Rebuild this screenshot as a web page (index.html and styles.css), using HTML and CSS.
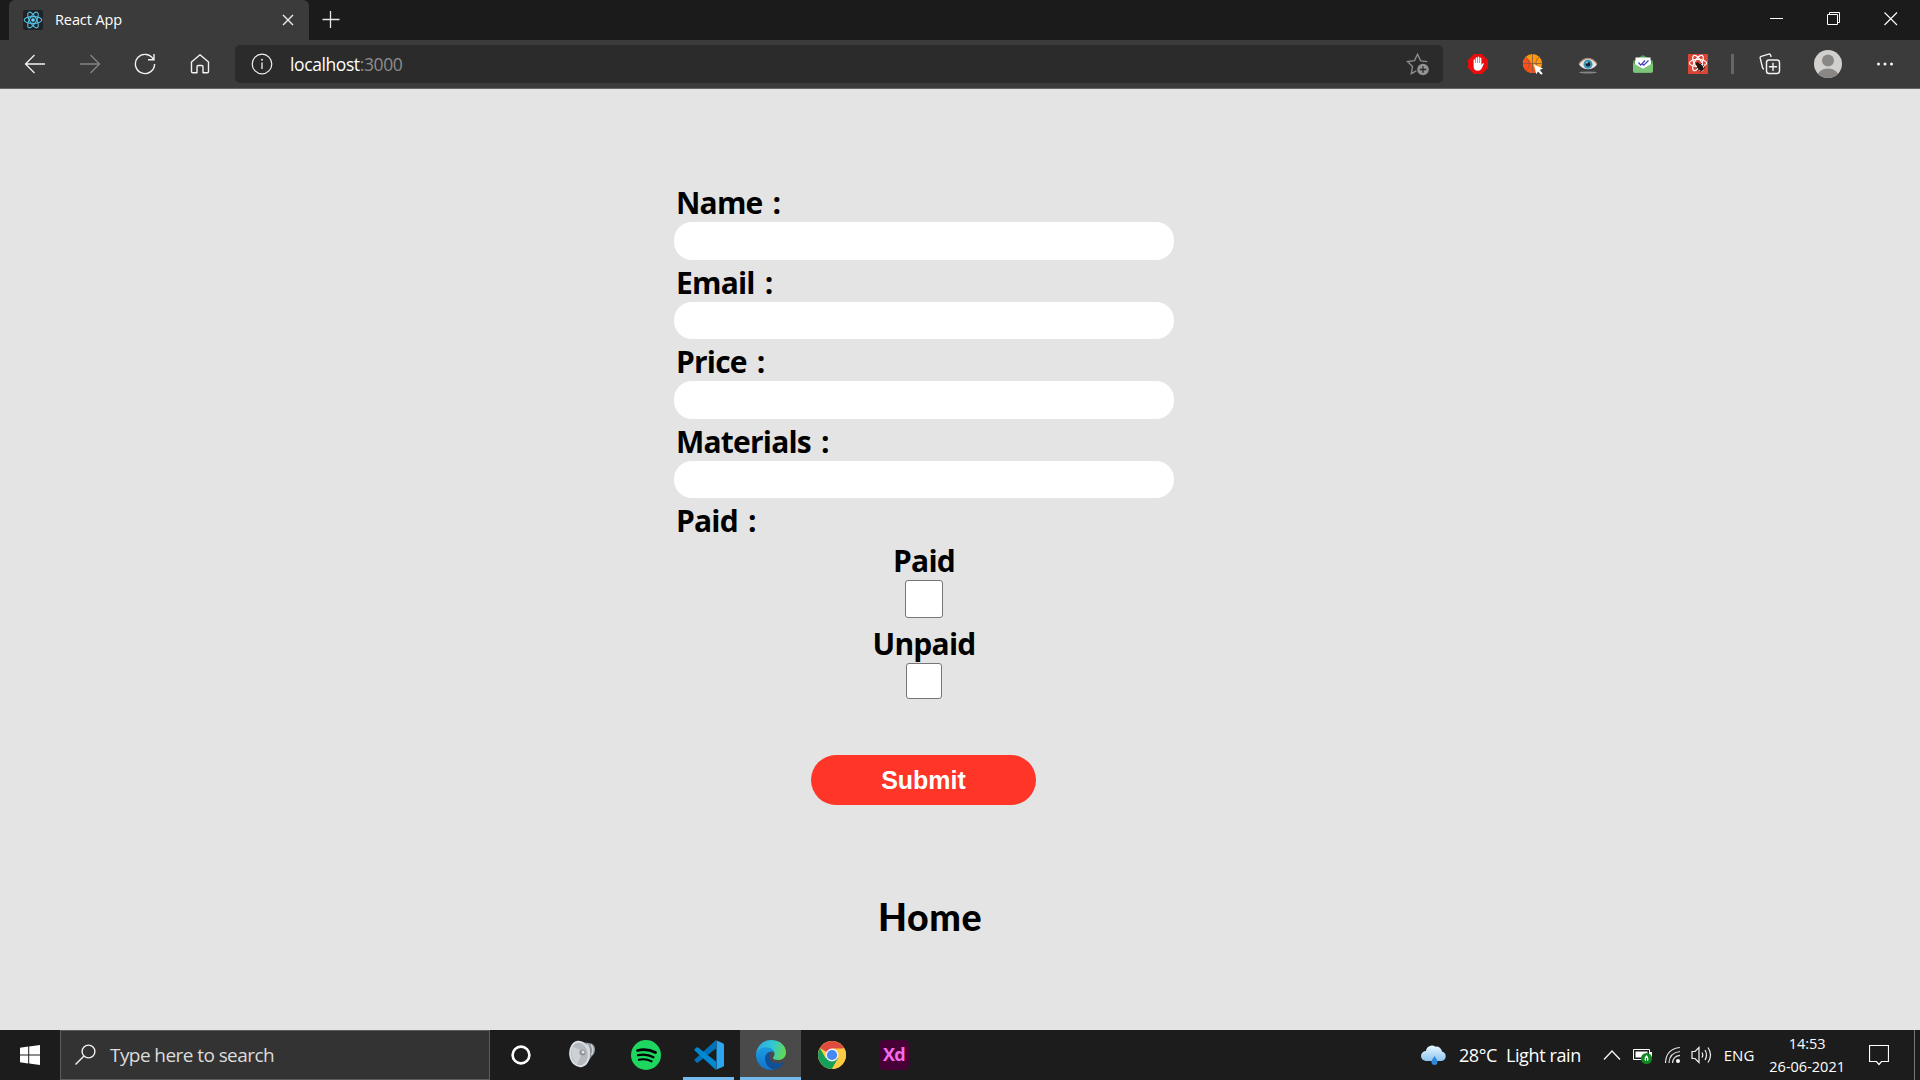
FILE: index.html
```html
<!DOCTYPE html>
<html lang="en">
<head>
<meta charset="utf-8">
<title>React App</title>
<link rel="stylesheet" href="styles.css">
</head>
<body>
<header class="tabstrip">
  <div class="tab">
    <svg class="favicon" width="20" height="20" viewBox="0 0 20 20"><rect width="20" height="20" rx="2" fill="#202226"/><g fill="none" stroke="#57c4e5" stroke-width="1.1"><ellipse cx="10" cy="10" rx="8.8" ry="3.4"/><ellipse cx="10" cy="10" rx="8.8" ry="3.4" transform="rotate(60 10 10)"/><ellipse cx="10" cy="10" rx="8.8" ry="3.4" transform="rotate(120 10 10)"/></g><circle cx="10" cy="10" r="1.8" fill="#61dafb"/></svg>
    <span class="tab-title">React App</span>
    <svg class="tab-close" width="12" height="12" viewBox="0 0 12 12"><path d="M1 1l10 10M11 1L1 11" stroke="#eee" stroke-width="1.4"/></svg>
  </div>
  <svg class="new-tab" width="18" height="18" viewBox="0 0 18 18"><path d="M.5 8.5h17M8.5 0v17" stroke="#e8e8e8" stroke-width="1.3"/></svg>
  <div class="window-controls">
    <svg width="14" height="14" viewBox="0 0 14 14"><path d="M0 6.5h13" stroke="#fff"/></svg>
    <svg width="14" height="14" viewBox="0 0 14 14"><path d="M.5 2.5h10v10H.5zM2.5 2.5v-2h10v10h-2" fill="none" stroke="#fff"/></svg>
    <svg width="14" height="14" viewBox="0 0 14 14"><path d="M.5 .5l12.5 12.5M13 .5L.5 13" stroke="#fff" stroke-width="1.1"/></svg>
  </div>
</header>
<nav class="toolbar">
  <div class="nav-buttons">
    <svg width="22" height="22" viewBox="0 0 22 22"><path d="M21 11H1.500M10.500 2L1.500 11l9 9" fill="none" stroke="#f2f2f2" stroke-width="1.3"/></svg>
    <svg width="22" height="22" viewBox="0 0 22 22"><path d="M1 11h19.500M11.500 2l9 9-9 9" fill="none" stroke="#858585" stroke-width="1.3"/></svg>
    <svg width="22" height="22" viewBox="0 0 22 22"><path d="M19.500 6.500a9.600 9.600 0 1 0 1.100 4.500M20 1v5.800h-6" fill="none" stroke="#f2f2f2" stroke-width="1.4"/></svg>
    <svg width="22" height="22" viewBox="0 0 22 22"><path d="M2.500 9L11 1.800 19.500 9v9.500q0 1.200-1.200 1.200h-4.300v-6q0-1.200-1.200-1.200H9.200q-1.200 0-1.200 1.200v6H3.700q-1.200 0-1.200-1.200z" fill="none" stroke="#f2f2f2" stroke-width="1.4" stroke-linejoin="round"/></svg>
  </div>
  <div class="address">
    <svg width="22" height="22" viewBox="0 0 22 22"><circle cx="11" cy="11" r="9.800" fill="none" stroke="#f2f2f2" stroke-width="1.200"/><path d="M11 9.500v6.500" stroke="#f2f2f2" stroke-width="1.300"/><circle cx="11" cy="6.800" r=".95" fill="#f2f2f2"/></svg>
    <span class="url"><span class="host">localhost</span><span class="port">:3000</span></span>
    <svg class="star" width="24" height="24" viewBox="0 0 24 24"><path d="M21.200 9.600l-6.500-.7L11.500 2.300 8.500 8.600l-7 1 5 5-1.200 7 5-2.700" fill="none" stroke="#8d8d8d" stroke-width="1.400"/><circle cx="17" cy="17.500" r="5.800" fill="#939393"/><path d="M17 14.300v6.400M13.800 17.500h6.400" stroke="#2b2b2b" stroke-width="1.300"/></svg>
  </div>
  <div class="extensions">
    <svg width="22" height="22" viewBox="0 0 22 22"><path d="M7 1h8l6 6v8l-6 6H7l-6-6V7z" fill="#e90d0d"/><path d="M6.600 11V6.700q.9-1 1.500 0V10h.5V4.800q.9-1 1.600 0V10h.5V4q.9-1 1.600 0v6h.5V5q.9-1 1.600 0v7l1.200-1.600q1-.6 1.400.2l-2.300 5q-1.300 2.200-3.700 2.200-4.400 0-4.400-4.500z" fill="#fff"/></svg>
    <svg width="22" height="22" viewBox="0 0 22 22"><circle cx="10.500" cy="10.500" r="9.600" fill="#ff980d"/><path d="M1 10.500l9.500 1 4 7.700A9.600 9.600 0 0 1 1 10.500z" fill="#ff4f19"/><path d="M3.300 4.500Q9 7 9.500 11q1 4 0 9A9.600 9.600 0 0 1 3.300 4.500z" fill="#ff4f19"/><path d="M10.500 1v19M1 10.500h19M4 4q6 6 1 13.500M17 4q-5 5-2 9" fill="none" stroke="#855943" stroke-width=".8"/><path d="M12 11.500l9 4-3.300 1.500 3 3.400-1.500 1.300-3.200-3.300-1.800 2.800z" fill="#fff"/></svg>
    <svg width="22" height="22" viewBox="0 0 22 22"><path d="M2 11.500Q5.500 5.700 11 5.700t9 5.800q-3.500 4.800-9 4.800t-9-4.800z" fill="#e9e6e3"/><path d="M2 11.200Q5.500 5.600 11 5.600t9 5.600" fill="none" stroke="#b99478" stroke-width="1.200"/><circle cx="11" cy="11.300" r="4.500" fill="#3c93b4"/><circle cx="11" cy="11.300" r="2.200" fill="#10222c"/><circle cx="10" cy="9.800" r=".8" fill="#fff"/><ellipse cx="11" cy="19.500" rx="9" ry=".9" fill="#858585"/></svg>
    <svg width="22" height="22" viewBox="0 0 22 22"><path d="M1 8l10-6 10 6v10q0 1.800-1.800 1.800H2.800Q1 19.800 1 18z" fill="#4f9f50"/><path d="M3.500 4.500h15v9l-7.500 5-7.500-5z" fill="#fff"/><path d="M1 10l10 5.500L21 10v8q0 1.800-1.800 1.800H2.800Q1 19.800 1 18z" fill="#7cc579"/><path d="M3 8v3l8 4.500 8-4.500V8z" fill="#fff"/><path d="M6.500 9.500l2.200 2.700L13 7.500M10.500 11l1.300 1.200 4.700-4.700" fill="none" stroke="#3d3dbb" stroke-width="1.200"/></svg>
    <svg width="22" height="22" viewBox="0 0 22 22"><rect x="1" y="1" width="20" height="20" rx="1" fill="#dc4535"/><g fill="none" stroke="#fff" stroke-width="1.200"><ellipse cx="11" cy="10" rx="8.600" ry="3.600"/><ellipse cx="11" cy="10" rx="8.600" ry="3.600" transform="rotate(60 11 10)"/><ellipse cx="11" cy="10" rx="8.600" ry="3.600" transform="rotate(120 11 10)"/></g><g transform="rotate(-40 13 14)" fill="#201511"><ellipse cx="13" cy="14.500" rx="2.500" ry="3.900"/><circle cx="13" cy="10" r="1.700"/><path d="M9 12.500h8M8.700 15h8.600M9.500 17.500h7" stroke="#201511" stroke-width=".9"/></g></svg>
  </div>
  <div class="divider"></div>
  <svg class="collections" width="22" height="22" viewBox="0 0 22 22"><path d="M5 16q-1.200 0-1.500-1.500L1.200 5.200q-.3-1.500 1-1.900L9.800 1.100q1.400-.3 1.800 1l.5 1.900" fill="none" stroke="#f2f2f2" stroke-width="1.400"/><rect x="7.500" y="7" width="13" height="13.500" rx="2.500" fill="none" stroke="#f2f2f2" stroke-width="1.500"/><path d="M14 9.700v8.200M9.900 13.800h8.200" stroke="#f2f2f2" stroke-width="1.400"/></svg>
  <svg class="avatar" width="28" height="28" viewBox="0 0 28 28"><clipPath id="av"><circle cx="14" cy="14" r="14"/></clipPath><g clip-path="url(#av)"><rect width="28" height="28" fill="#d2d0ce"/><circle cx="14" cy="10.500" r="6" fill="#8a8683"/><ellipse cx="14" cy="26" rx="10.500" ry="7.500" fill="#8a8683"/></g></svg>
  <svg class="more" width="18" height="6" viewBox="0 0 18 6"><g fill="#f4f4f4"><circle cx="2.500" cy="3" r="1.500"/><circle cx="9" cy="3" r="1.500"/><circle cx="15.500" cy="3" r="1.500"/></g></svg>
</nav>
<main class="page">
  <form class="form">
    <label class="label" for="name">Name :</label><input class="field" id="name" type="text">
    <label class="label" for="email">Email :</label><input class="field" id="email" type="text">
    <label class="label" for="price">Price :</label><input class="field" id="price" type="text">
    <label class="label" for="materials">Materials :</label><input class="field" id="materials" type="text">
    <span class="label">Paid :</span>
    <div class="choice"><span class="choice-name">Paid</span><span class="box"></span></div>
    <div class="choice"><span class="choice-name">Unpaid</span><span class="box box-small"></span></div>
    <button class="submit" type="button">Submit</button>
  </form>
  <a class="home">Home</a>
</main>
<footer class="taskbar">
  <div class="start"><svg width="20" height="20" viewBox="0 0 20 20"><path d="M0 2.800l8.200-1.200v7.900H0zM9.200 1.400L20 0v9.500H9.200zM0 10.500h8.200v7.900L0 17.200zM9.200 10.500H20V20L9.200 18.600z" fill="#fff"/></svg></div>
  <div class="search"><svg width="22" height="22" viewBox="0 0 22 22"><circle cx="13.500" cy="7.500" r="6.400" fill="none" stroke="#f2f2f2" stroke-width="1.400"/><path d="M9 12L.5 20.500" stroke="#f2f2f2" stroke-width="1.400"/></svg><span class="search-text">Type here to search</span></div>
  <div class="apps">
    <div class="app"><svg width="30" height="30" viewBox="0 0 30 30"><circle cx="15" cy="15" r="8.400" fill="none" stroke="#fff" stroke-width="2.600"/></svg></div>
    <div class="app"><svg width="30" height="30" viewBox="0 0 30 30"><path d="M14 2l8 1q5 .5 6 5 .5 5-3 8l-7 10z" fill="#8d949b"/><path d="M20 4q4 5 1 12M24 4.500q3.500 5 .5 10.500" stroke="#d0d5da" fill="none" stroke-width="1.500"/><ellipse cx="12.500" cy="14" rx="10.300" ry="13.300" transform="rotate(-8 12.500 14)" fill="#dce0e6"/><ellipse cx="12.500" cy="14" rx="8.500" ry="11.300" transform="rotate(-8 12.500 14)" fill="#b5bac0"/><path d="M5.500 6.500L16 11 10 25Q2.500 16 5.500 6.500z" fill="#cdd1d6"/><circle cx="15.500" cy="12.500" r="3" fill="#8b9197"/><circle cx="16" cy="12" r="1.500" fill="#e6e6e6"/></svg></div>
    <div class="app app-wide"><svg width="30" height="30" viewBox="0 0 30 30"><circle cx="15" cy="15" r="15" fill="#1ed760"/><g fill="none" stroke="#000" stroke-linecap="round"><path d="M6.500 10.500q9.500-2.500 18 2" stroke-width="2.800"/><path d="M7 15.200q8.500-2 15.500 2" stroke-width="2.300"/><path d="M7.700 19.700q7-1.600 13 1.700" stroke-width="1.900"/></g></svg></div>
    <div class="app app-code"><svg width="30" height="30" viewBox="0 0 30 30"><path d="M22 0L.8 19.200q-.8.900 0 1.700l1.700 1.500q.8.600 1.600 0L22 8.500z" fill="#0070b8"/><path d="M22 30L.8 10.800q-.8-.9 0-1.700l1.700-1.500q.8-.6 1.600 0L22 21.500z" fill="#0089d2"/><path d="M21.500 0L29 3.200q1 .5 1 1.600v20.400q0 1.100-1 1.600L21.500 30q1 0 1-1.200V1.200Q22.500 0 21.500 0z" fill="#2ba7f2"/></svg></div>
    <div class="app app-edge"><svg width="30" height="30" viewBox="0 0 30 30"><defs><linearGradient id="eg" x1="0" y1=".4" x2="1" y2=".6"><stop stop-color="#2ea9e2"/><stop offset=".5" stop-color="#31c7d6"/><stop offset="1" stop-color="#66dc49"/></linearGradient><linearGradient id="eb" x1="0" y1="0" x2="0" y2="1"><stop stop-color="#1b9de0"/><stop offset="1" stop-color="#1273cc"/></linearGradient></defs><path d="M0 15C.5 6 7 0 15 0c9 0 15 5.500 15 12.500 0 5-4 7.500-8 7.500-3 0-5-1-5-2s1.500-1.500 1.500-4c0-3-3-6-7.500-6C5 8 1 12 0 15z" fill="url(#eg)"/><path d="M0 15c1-5 5-7.700 10-7.700 5 0 8.500 3 8.500 6-1-1.500-2.500-2-4-1.500C10 13 8.500 17 9.500 21c1 4.500 5 8 9 8.500C8 32 0 24 0 15z" fill="url(#eb)"/><path d="M14.500 11.800C10 13 8.500 17 9.500 21c1 4.500 5 8.300 9 8.500 4-.7 7-3 9-6 .5-1-.2-1.400-1-1-6 2.500-14-.5-13.500-7 .1-1.700.7-2.900 1.500-3.700z" fill="#0f509b"/></svg></div>
    <div class="app"><svg width="30" height="30" viewBox="0 0 30 30"><circle cx="15" cy="15" r="14" fill="#fdca43"/><path d="M15 15L2.900 8A14 14 0 0 1 27.100 8z" fill="#e04a3f"/><path d="M15 15l6.100 3.500L15 29A14 14 0 0 1 2.900 8l6 10.500z" fill="#159f5b"/><path d="M15 8.500h12.400A14 14 0 0 1 15 29l6-10.500z" fill="#fdca43"/><circle cx="15" cy="15" r="6.500" fill="#eef1f5"/><circle cx="15" cy="15" r="5.100" fill="#4688f4"/></svg></div>
    <div class="app"><span class="xd">Xd</span></div>
  </div>
  <div class="tray">
    <svg class="weather" width="26" height="22" viewBox="0 0 26 22"><defs><linearGradient id="wc" x1="0" y1="0" x2="0" y2="1"><stop stop-color="#eaf7ff"/><stop offset="1" stop-color="#8cc4f0"/></linearGradient></defs><path d="M5 17a5 5 0 0 1 0-10 6 5.500 0 0 1 9.500-4.300A5.500 5.500 0 0 1 21 7.500 4.900 4.900 0 0 1 21 17z" fill="url(#wc)"/><path d="M13.500 12q3 4 3 6a3 3 0 0 1-6 0Q10.500 16 13.500 12z" fill="#2f87dc"/></svg>
    <span class="temp">28°C</span><span class="cond">Light rain</span>
    <svg class="chev" width="18" height="12" viewBox="0 0 18 12"><path d="M1 10.500L9 2l8 8.500" fill="none" stroke="#f2f2f2" stroke-width="1.400"/></svg>
    <svg class="batt" width="20" height="18" viewBox="0 0 20 18"><path d="M.5 3.500h16v10H.5z" fill="none" stroke="#fff"/><path d="M2.500 5.500h12v6h-12zM17 6h2v5h-2z" fill="#fff"/><circle cx="13.500" cy="12.500" r="5.500" fill="#108a20"/><path d="M13.500 9q2.600 2.500 2 4.500-.8 1.500-2 1.500t-2-1.500q-.6-2 2-4.500z" fill="#fff"/><path d="M13.500 12v4.500" stroke="#108a20"/></svg>
    <svg class="wifi" width="18" height="18" viewBox="0 0 18 18"><g fill="none" stroke="#ddd" stroke-width="1.200"><path d="M1.500 17Q2 3 16 1.500"/><path d="M5 17Q5.500 6.500 16 5.500"/><path d="M8.500 17Q9 10 16 9.300"/></g><circle cx="14" cy="15" r="2" fill="#fff"/></svg>
    <svg class="vol" width="22" height="20" viewBox="0 0 22 20"><g fill="none" stroke="#f2f2f2" stroke-width="1.200"><path d="M1 6.500h3l4-4v15l-4-4H1z"/><path d="M11 7.500q1.500 2.500 0 5M14 5q3 5 0 10M17 2.500q5 7.500 0 15"/></g></svg>
    <span class="lang">ENG</span>
    <span class="clock"><span>14:53</span><span>26-06-2021</span></span>
    <svg class="notif" width="20" height="21" viewBox="0 0 20 21"><path d="M.5 .5h19v16H12.500L10 19.500 7.500 16.500H.5z" fill="none" stroke="#fff" stroke-width="1.200"/></svg>
    <span class="peek"></span>
  </div>
</footer>
</body>
</html>
```
FILE: styles.css
```css
* { box-sizing: border-box; }
body { margin: 0; width: 1920px; height: 1080px; display: flex; flex-direction: column; overflow: hidden; background: #e4e4e4; font-family: "Open Sans", "Noto Sans", sans-serif; white-space: nowrap; }
svg { display: block; flex: none; }

.tabstrip { height: 40px; flex: none; display: flex; background: #1b1b1b; padding-left: 9px; }
.tab { width: 300px; height: 40px; background: #3b3b3b; border-radius: 6px 6px 0 0; display: flex; align-items: center; padding: 0 15px 0 14px; }
.tab-title { margin-left: 12px; color: #fff; font-size: 14.5px; line-height: 20px; letter-spacing: -0.1px; }
.tab-close { margin-left: auto; }
.new-tab { margin: 11px 0 0 13px; }
.window-controls { display: flex; gap: 43px; margin: 12px 22px 0 auto; }

.toolbar { height: 49px; flex: none; display: flex; align-items: center; background: #3b3b3b; border-bottom: 1px solid #666; padding: 0 0 1px 24px; }
.nav-buttons { display: flex; gap: 33px; width: 211px; }
.address { width: 1208px; height: 38px; border-radius: 5px; background: #2b2b2b; display: flex; align-items: center; padding: 0 13px 0 16px; }
.url { display: flex; margin-left: 17px; font-size: 17.5px; line-height: 24px; letter-spacing: -0.4px; }
.host { color: #fff; }
.port { color: #8d8d8d; }
.star { margin-left: auto; }
.extensions { display: flex; gap: 33px; margin-left: 24px; }
.divider { width: 3px; height: 20px; margin-left: 22px; background: #666; }
.collections { margin-left: 25px; }
.avatar { margin-left: 33px; }
.more { margin-left: 34px; }

.page { flex: 1; display: flex; flex-direction: column; padding-top: 91px; }
.form { width: 500px; margin-left: 674px; display: flex; flex-direction: column; font-weight: 700; font-size: 30px; letter-spacing: -0.8px; }
.label { height: 42px; line-height: 46px; padding-left: 2px; word-spacing: 3px; }
.field { width: 500px; height: 37.5px; border: 0; border-radius: 18px; background: #fff; }
.choice { display: flex; flex-direction: column; align-items: center; height: 83px; line-height: 42px; }
.choice-name { height: 40px; }
.box { width: 38px; height: 38px; background: #fff; border: 1px solid #767676; border-radius: 3px; }
.box-small { width: 36px; height: 36px; }
.submit { width: 225px; height: 50px; margin: 49px 0 0 137px; border: 0; border-radius: 25px; background: #ff3527; color: #fff; font: 700 25px/50px "Liberation Sans", Arial, sans-serif; padding: 0; }
.home { margin: 86px 0 0 878px; font: 900 37.5px/52px Lato, sans-serif; letter-spacing: 0.6px; color: #000; }

.taskbar { height: 50px; flex: none; display: flex; background: #1c1c1c; color: #fff; }
.start { width: 60px; display: flex; align-items: center; justify-content: center; }
.search { width: 430px; background: #333; border: 1px solid #5c5c5c; display: flex; align-items: center; padding-left: 14px; }
.search-text { margin-left: 13px; font-size: 19px; letter-spacing: -0.57px; color: #dcdcdc; }
.apps { display: flex; }
.app { width: 62px; display: flex; align-items: center; justify-content: center; }
.app:first-child { width: 61px; }
.app-wide { width: 65px; }
.app-code { width: 51px; margin: 0 6px 0 5px; border-bottom: 3px solid #76b9ed; padding-top: 3px; }
.app-edge { width: 61px; border-bottom: 3px solid #76b9ed; padding-top: 3px; background: #4a4a4a; }
.xd { width: 30px; height: 30px; border-radius: 5px; background: #470137; color: #f36bee; font-weight: 700; font-size: 18px; line-height: 29px; letter-spacing: -0.8px; text-align: center; }
.tray { margin-left: auto; display: flex; align-items: center; }
.temp, .cond { font-size: 18px; letter-spacing: -0.4px; }
.temp { margin-left: 12px; }
.cond { margin-left: 9px; }
.chev { margin-left: 22px; }
.batt { margin-left: 12px; }
.wifi { margin-left: 11px; }
.vol { margin-left: 9px; }
.lang { margin-left: 11px; font-size: 15px; }
.clock { display: flex; flex-direction: column; align-items: center; margin-left: 15px; font-size: 14.5px; line-height: 23px; }
.notif { margin-left: 24px; }
.peek { width: 6px; height: 50px; margin-left: 25px; border-left: 1px solid #777; }
```
